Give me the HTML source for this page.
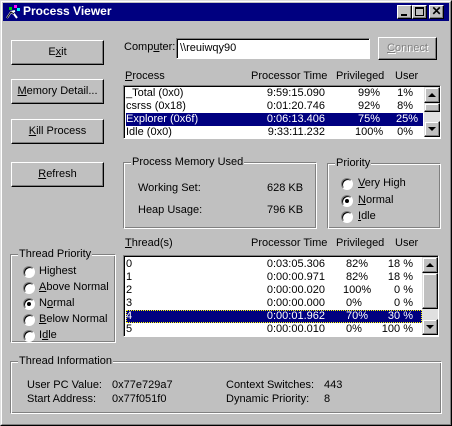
<!DOCTYPE html><html><head><style>
*{box-sizing:border-box;margin:0;padding:0}
body{width:452px;height:426px;background:#c0c0c0;font-family:"Liberation Sans",Arial,sans-serif;font-size:11px;color:#000;position:relative;overflow:hidden}
.a{position:absolute;white-space:nowrap;line-height:13px}
.win{position:absolute;left:0;top:0;width:452px;height:426px;border:1px solid;border-color:#dfdfdf #000 #000 #dfdfdf}
.win2{position:absolute;left:1px;top:1px;right:1px;bottom:1px;border:1px solid;border-color:#fff #808080 #808080 #fff}
.btn{position:absolute;border:1px solid;border-color:#fff #000 #000 #fff;box-shadow:inset -1px -1px #808080;text-align:center;background:#c0c0c0}
.sunk{position:absolute;border:1px solid;border-color:#808080 #fff #fff #808080;box-shadow:inset 1px 1px #000;background:#fff}
.grp{position:absolute;border:1px solid;border-color:#808080 #fff #fff #808080;box-shadow:inset 1px 1px #fff,inset -1px -1px #808080}
.gl{position:absolute;background:#c0c0c0;padding:0 1px;line-height:13px;top:-7px;left:7px}
.r{position:absolute;width:12px;height:12px;border-radius:50%;background:#fff;border:1px solid;border-color:#808080 #fff #fff #808080;box-shadow:inset 1px 1px #000}
.r.on::after{content:"";position:absolute;left:3px;top:3px;width:4px;height:4px;background:#000;border-radius:50%}
.sb{position:absolute;width:16px;background:#e0e0e0}
.ar{position:absolute;left:0;width:16px;height:16px;border:1px solid;border-color:#dfdfdf #000 #000 #dfdfdf;box-shadow:inset -1px -1px #808080,inset 1px 1px #fff;background:#c0c0c0}
.row{position:absolute;left:2px;height:13px;line-height:13px}
.row span{position:absolute}
.sel{background:#000080;color:#fff}
u{text-decoration:underline}
</style></head><body>
<div class="win"></div><div class="win2"></div>
<div class="a" style="left:3px;top:3px;width:446px;height:18px;background:#000080"></div>
<svg class="a" style="left:5px;top:4px" width="16" height="16"><rect x="9" y="1" width="3" height="3" fill="#f0f"/><rect x="4" y="3" width="3" height="3" fill="#0c0"/><rect x="12" y="4" width="3" height="3" fill="#0ff"/><path d="M2 14 L6 8 L9 10 L12 14 M6 8 L10 7" stroke="#fff" stroke-width="2" fill="none"/><path d="M2 14 L6 8 L9 10" stroke="#000" stroke-width="1" fill="none"/></svg>
<div class="a" style="left:23px;top:5px;color:#fff;font-weight:bold;font-size:12px">Process Viewer</div>
<div class="btn" style="left:397px;top:5px;width:15px;height:14px"><div style="position:absolute;left:3px;top:8px;width:6px;height:2px;background:#000"></div></div>
<div class="btn" style="left:412px;top:5px;width:15px;height:14px"><div style="position:absolute;left:2px;top:1px;width:9px;height:9px;border:1px solid #000;border-top-width:2px"></div></div>
<div class="btn" style="left:429px;top:5px;width:15px;height:14px;font-weight:bold;line-height:11px;font-size:12px">✕</div>

<div class="btn" style="left:11px;top:40px;width:93px;height:25px;line-height:22px">E<u>x</u>it</div>
<div class="btn" style="left:11px;top:79px;width:93px;height:25px;line-height:22px"><u>M</u>emory Detail...</div>
<div class="btn" style="left:11px;top:119px;width:93px;height:25px;line-height:22px"><u>K</u>ill Process</div>
<div class="btn" style="left:11px;top:162px;width:93px;height:25px;line-height:22px"><u>R</u>efresh</div>

<div class="a" style="left:124px;top:41px">Comp<u>u</u>ter:</div>
<div class="sunk" style="left:176px;top:38px;width:194px;height:21px"><div class="a" style="left:3px;top:3px">\\reuiwqy90</div></div>
<div class="btn" style="left:378px;top:37px;width:59px;height:23px;line-height:20px;color:#808080;text-shadow:1px 1px #fff"><u>C</u>onnect</div>

<div class="a" style="left:125px;top:70px"><u>P</u>rocess</div>
<div class="a" style="left:251px;top:70px">Processor Time</div>
<div class="a" style="left:336px;top:70px">Privileged</div>
<div class="a" style="left:395px;top:70px">User</div>
<div class="sunk" style="left:123px;top:85px;width:318px;height:54px">
<div class="row" style="top:1px;width:297px"><span style="left:0">_Total (0x0)</span><span style="right:98px">9:59:15.090</span><span style="left:232px">99%</span><span style="right:10px">1%</span></div>
<div class="row" style="top:14px;width:297px"><span style="left:0">csrss (0x18)</span><span style="right:98px">0:01:20.746</span><span style="left:232px">92%</span><span style="right:10px">8%</span></div>
<div class="row sel" style="top:27px;width:297px"><span style="left:0">Explorer (0x6f)</span><span style="right:98px">0:06:13.406</span><span style="left:232px">75%</span><span style="right:5px">25%</span></div>
<div class="row" style="top:40px;width:297px"><span style="left:0">Idle (0x0)</span><span style="right:98px">9:33:11.232</span><span style="left:229px">100%</span><span style="right:10px">0%</span></div>
<div class="sb" style="left:300px;top:1px;height:50px"><div class="ar" style="top:0"><svg width="14" height="14"><path d="M3 9h8L7 5z" fill="#000"/></svg></div><div class="ar" style="top:16px;height:9px"></div><div class="ar" style="top:34px"><svg width="14" height="14"><path d="M3 5h8L7 9z" fill="#000"/></svg></div></div>
</div>

<div class="grp" style="left:123px;top:162px;width:194px;height:67px"><div class="gl">Process Memory Used</div>
<div class="a" style="left:14px;top:19px">Working Set:</div><div class="a" style="left:143px;top:19px">628 KB</div>
<div class="a" style="left:14px;top:41px">Heap Usage:</div><div class="a" style="left:143px;top:41px">796 KB</div></div>

<div class="grp" style="left:327px;top:163px;width:114px;height:66px"><div class="gl">Priority</div>
<div class="r" style="left:13px;top:14px"></div><div class="a" style="left:30px;top:13px"><u>V</u>ery High</div>
<div class="r on" style="left:13px;top:31px"></div><div class="a" style="left:30px;top:30px"><u>N</u>ormal</div>
<div class="r" style="left:13px;top:47px"></div><div class="a" style="left:30px;top:46px"><u>I</u>dle</div></div>

<div class="a" style="left:125px;top:237px"><u>T</u>hread(s)</div>
<div class="a" style="left:251px;top:237px">Processor Time</div>
<div class="a" style="left:336px;top:237px">Privileged</div>
<div class="a" style="left:395px;top:237px">User</div>
<div class="sunk" style="left:123px;top:255px;width:316px;height:82px">
<div class="row" style="top:2px;width:296px"><span style="left:0">0</span><span style="right:97px">0:03:05.306</span><span style="left:220px">82%</span><span style="right:9px">18 %</span></div>
<div class="row" style="top:15px;width:296px"><span style="left:0">1</span><span style="right:97px">0:00:00.971</span><span style="left:220px">82%</span><span style="right:9px">18 %</span></div>
<div class="row" style="top:28px;width:296px"><span style="left:0">2</span><span style="right:97px">0:00:00.020</span><span style="left:217px">100%</span><span style="right:9px">0 %</span></div>
<div class="row" style="top:41px;width:296px"><span style="left:0">3</span><span style="right:97px">0:00:00.000</span><span style="left:220px">0%</span><span style="right:9px">0 %</span></div>
<div class="row sel" style="top:54px;width:296px;outline:1px dotted #ff0;outline-offset:-1px"><span style="left:0">4</span><span style="right:97px">0:00:01.962</span><span style="left:220px">70%</span><span style="right:9px">30 %</span></div>
<div class="row" style="top:67px;width:296px"><span style="left:0">5</span><span style="right:97px">0:00:00.010</span><span style="left:220px">0%</span><span style="right:9px">100 %</span></div>
<div class="sb" style="left:298px;top:1px;height:78px"><div class="ar" style="top:0"><svg width="14" height="14"><path d="M3 9h8L7 5z" fill="#000"/></svg></div><div class="ar" style="top:16px;height:36px"></div><div class="ar" style="top:62px"><svg width="14" height="14"><path d="M3 5h8L7 9z" fill="#000"/></svg></div></div>
</div>

<div class="grp" style="left:10px;top:254px;width:106px;height:89px"><div class="gl">Thread Priority</div>
<div class="r" style="left:12px;top:11px"></div><div class="a" style="left:28px;top:10px">Highest</div>
<div class="r" style="left:12px;top:27px"></div><div class="a" style="left:28px;top:26px"><u>A</u>bove Normal</div>
<div class="r on" style="left:12px;top:43px"></div><div class="a" style="left:28px;top:42px">N<u>o</u>rmal</div>
<div class="r" style="left:12px;top:59px"></div><div class="a" style="left:28px;top:58px"><u>B</u>elow Normal</div>
<div class="r" style="left:12px;top:75px"></div><div class="a" style="left:28px;top:74px">I<u>d</u>le</div></div>

<div class="grp" style="left:10px;top:361px;width:432px;height:53px"><div class="gl">Thread Information</div>
<div class="a" style="left:16px;top:17px">User PC Value:</div><div class="a" style="left:101px;top:17px">0x77e729a7</div>
<div class="a" style="left:16px;top:31px">Start Address:</div><div class="a" style="left:101px;top:31px">0x77f051f0</div>
<div class="a" style="left:215px;top:17px">Context Switches:</div><div class="a" style="left:313px;top:17px">443</div>
<div class="a" style="left:215px;top:31px">Dynamic Priority:</div><div class="a" style="left:313px;top:31px">8</div></div>
</body></html>
